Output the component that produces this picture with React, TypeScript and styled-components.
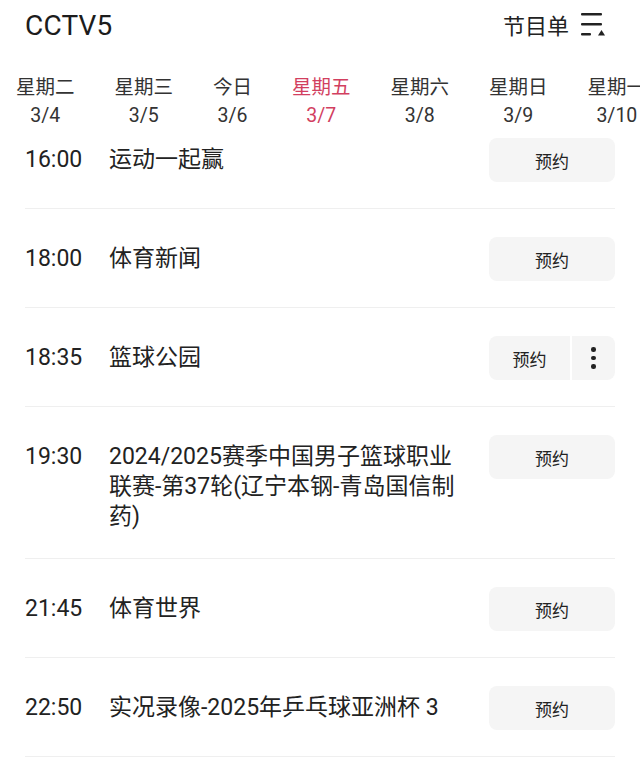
import styled, { createGlobalStyle } from 'styled-components';

const GlobalStyle = createGlobalStyle`
  html, body {
    margin: 0;
    padding: 0;
    background: #ffffff;
  }
  * {
    box-sizing: border-box;
  }
`;

const days = [
  { name: '星期二', date: '3/4' },
  { name: '星期三', date: '3/5' },
  { name: '今日', date: '3/6' },
  { name: '星期五', date: '3/7', active: true },
  { name: '星期六', date: '3/8' },
  { name: '星期日', date: '3/9' },
  { name: '星期一', date: '3/10' },
];

const programs = [
  { time: '16:00', title: '运动一起赢' },
  { time: '18:00', title: '体育新闻' },
  { time: '18:35', title: '篮球公园', more: true },
  { time: '19:30', title: '2024/2025赛季中国男子篮球职业联赛-第37轮(辽宁本钢-青岛国信制药)' },
  { time: '21:45', title: '体育世界' },
  { time: '22:50', title: '实况录像-2025年乒乓球亚洲杯 3' },
];

const ListIcon = () => (
  <svg width="26" height="26" viewBox="0 0 26 26">
    <rect x="1" y="2" width="21" height="2.6" rx="1" fill="#222" />
    <rect x="1" y="12" width="21" height="2.6" rx="1" fill="#222" />
    <rect x="1" y="22" width="10" height="2.6" rx="1" fill="#222" />
    <path d="M18 24.6 L21.5 19 L25 24.6 Z" fill="#222" />
  </svg>
);

const App = () => {
  return (
    <Page>
      <GlobalStyle />
      <TopBar>
        <ChannelName>CCTV5</ChannelName>
        <GuideLink>
          节目单
          <ListIcon />
        </GuideLink>
      </TopBar>
      <DayTabs>
        {days.map((d) => (
          <DayTab key={d.date} $active={d.active}>
            <span>{d.name}</span>
            <span>{d.date}</span>
          </DayTab>
        ))}
      </DayTabs>
      <Viewport>
        <ProgramList>
          {programs.map((p) => (
            <ProgramRow key={p.time}>
              <Time>{p.time}</Time>
              <Title>{p.title}</Title>
              <Actions>
                <ReserveButton $split={p.more}>预约</ReserveButton>
                {p.more && (
                  <MoreButton>
                    <Dot />
                    <Dot />
                    <Dot />
                  </MoreButton>
                )}
              </Actions>
            </ProgramRow>
          ))}
        </ProgramList>
      </Viewport>
    </Page>
  );
};

export default App;

const Page = styled.div`
  width: 640px;
  height: 763px;
  overflow: hidden;
  display: flex;
  flex-direction: column;
  background: #ffffff;
  color: #222222;
  font-family: Roboto, 'Noto Sans CJK SC', sans-serif;
`;

const TopBar = styled.div`
  height: 50px;
  padding: 0 34px 0 25px;
  display: flex;
  align-items: center;
  justify-content: space-between;
  flex-shrink: 0;
`;

const ChannelName = styled.div`
  font-size: 28px;
  font-weight: 400;
  letter-spacing: 0.2px;
  color: #1c1c1c;
`;

const GuideLink = styled.div`
  display: flex;
  align-items: center;
  gap: 11px;
  font-size: 22px;
  color: #222;
  margin-top: -3px;
`;

const DayTabs = styled.div`
  margin-top: 24px;
  padding-left: 16px;
  height: 57px;
  display: flex;
  gap: 40px;
  white-space: nowrap;
  overflow: hidden;
  flex-shrink: 0;
`;

const DayTab = styled.div<{ $active?: boolean }>`
  display: flex;
  flex-direction: column;
  align-items: center;
  font-size: 19.5px;
  line-height: 28px;
  color: ${({ $active }) => ($active ? '#d23f5f' : '#333333')};
`;

const Viewport = styled.div`
  flex: 1;
  overflow: hidden;
`;

const ProgramList = styled.div`
  margin-top: -21px;
`;

const ProgramRow = styled.div`
  margin: 0 25px;
  padding: 28px 0 26px;
  border-bottom: 1px solid #efefef;
  display: flex;
  align-items: flex-start;
`;

const Time = styled.div`
  width: 84px;
  flex-shrink: 0;
  margin-top: 7px;
  font-size: 23px;
  line-height: 30px;
  color: #222;
`;

const Title = styled.div`
  flex: 1;
  margin-top: 7px;
  margin-right: 22px;
  font-size: 23px;
  line-height: 30px;
  color: #222;
`;

const Actions = styled.div`
  width: 126px;
  height: 44px;
  flex-shrink: 0;
  display: flex;
  gap: 2px;
`;

const ReserveButton = styled.div<{ $split?: boolean }>`
  flex: 1;
  display: flex;
  align-items: center;
  justify-content: center;
  background: #f5f5f5;
  border-radius: ${({ $split }) => ($split ? '8px 0 0 8px' : '8px')};
  font-size: 17px;
  color: #222;
`;

const MoreButton = styled.div`
  width: 43px;
  display: flex;
  flex-direction: column;
  align-items: center;
  justify-content: center;
  gap: 4px;
  background: #f5f5f5;
  border-radius: 0 8px 8px 0;
`;

const Dot = styled.span`
  width: 4.5px;
  height: 4.5px;
  border-radius: 50%;
  background: #222;
`;
